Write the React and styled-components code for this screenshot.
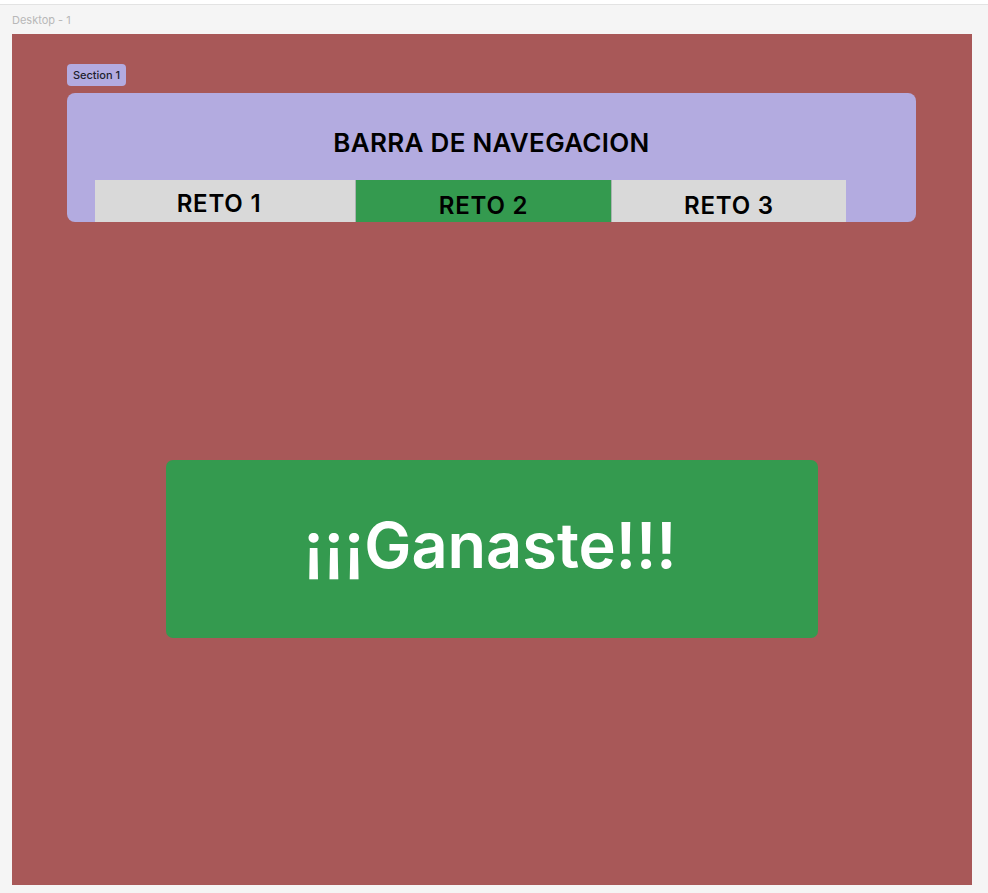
import React from "react";
import styled, { createGlobalStyle } from "styled-components";

const Global = createGlobalStyle`
  html, body { margin: 0; padding: 0; }
  body {
    background: #f5f5f5;
    font-family: Inter, "Noto Sans", "Liberation Sans", sans-serif;
    width: 988px;
    height: 893px;
    overflow: hidden;
  }
`;

const Canvas = styled.div`
  width: 988px;
  height: 893px;
  display: flex;
  flex-direction: column;
  background: #f5f5f5;
`;

const TopStrip = styled.div`
  height: 4px;
  background: #ffffff;
  border-bottom: 1px solid #e3e3e3;
`;

const FrameLabel = styled.div`
  font-size: 11px;
  color: #b8b8b8;
  padding: 8px 0 0 12px;
  height: 21px;
  line-height: 14px;
`;

const Frame = styled.div`
  margin-left: 12px;
  width: 960px;
  height: 851px;
  background: #a85858;
  display: flex;
  flex-direction: column;
  align-items: flex-start;
  padding: 30px 0 0 55px;
  box-sizing: border-box;
`;

const SectionTag = styled.div`
  height: 22px;
  width: 59px;
  box-sizing: border-box;
  background: #b3abe0;
  border-radius: 4px;
  font-size: 11px;
  font-weight: 500;
  color: #1e1e2e;
  display: flex;
  align-items: center;
  justify-content: center;
`;

const NavBar = styled.nav`
  margin-top: 7px;
  width: 849px;
  height: 129px;
  background: #b3abe0;
  border-radius: 8px;
  overflow: hidden;
  display: flex;
  flex-direction: column;
  box-sizing: border-box;
  padding-top: 34px;
`;

const NavTitle = styled.h1`
  margin: 0;
  text-align: center;
  font-size: 26px;
  font-weight: 600;
  line-height: 31px;
  letter-spacing: 0.3px;
  color: #000;
`;

const Tabs = styled.div`
  margin-top: 22px;
  margin-left: 28px;
  display: flex;
  height: 42px;
`;

const Tab = styled.div`
  width: ${(p) => p.$w}px;
  height: 42px;
  flex: none;
  box-sizing: border-box;
  background: ${(p) => (p.$active ? "#349a4f" : "#d9d9d9")};
  border-left: ${(p) => (p.$divider ? "1px solid #a9b4b0" : "none")};
  padding-top: ${(p) => p.$pt}px;
  padding-right: ${(p) => p.$pr || 0}px;
  text-align: center;
  font-size: 24px;
  font-weight: 600;
  line-height: 29px;
  letter-spacing: 0.8px;
  color: #000;
`;

const Stage = styled.div`
  margin-top: 238px;
  margin-left: 99px;
  width: 652px;
  height: 178px;
  background: #349a4f;
  border-radius: 7px;
  display: flex;
  align-items: center;
  justify-content: center;
`;

const WinText = styled.div`
  color: #ffffff;
  font-size: 63px;
  font-weight: 600;
  line-height: 77px;
  margin-top: -8px;
  margin-right: 4px;
`;

export default function App() {
  return (
    <>
      <Global />
      <Canvas>
        <TopStrip />
        <FrameLabel>Desktop - 1</FrameLabel>
        <Frame>
          <SectionTag>Section 1</SectionTag>
          <NavBar>
            <NavTitle>BARRA DE NAVEGACION</NavTitle>
            <Tabs>
              <Tab $w={260} $pt={9} $pr={12}>RETO 1</Tab>
              <Tab $w={256} $pt={11} $active $divider>RETO 2</Tab>
              <Tab $w={235} $pt={11} $divider>RETO 3</Tab>
            </Tabs>
          </NavBar>
          <Stage>
            <WinText>¡¡¡Ganaste!!!</WinText>
          </Stage>
        </Frame>
      </Canvas>
    </>
  );
}
